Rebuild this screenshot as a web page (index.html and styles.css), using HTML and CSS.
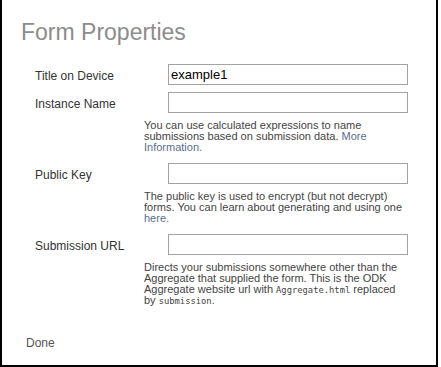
FILE: index.html
```html
<!DOCTYPE html>
<html lang="en">

<head>
  <meta charset="UTF-8">
  <meta name="viewport" content="width=device-width, initial-scale=1.0">
  <title>Form Properties</title>
  <link rel="stylesheet" href="styles.css">
</head>

<body>
  <div class="dialog">
    <h1>Form Properties</h1>

    <!-- Properties Form -->
    <form class="props">
      <div class="field">
        <div class="row">
          <label for="title">Title on Device</label>
          <input type="text" id="title" value="example1">
        </div>
      </div>

      <div class="field">
        <div class="row">
          <label for="instance">Instance Name</label>
          <input type="text" id="instance">
        </div>
        <p class="help">You can use calculated expressions to name submissions based on submission data. <a href="#">More Information.</a></p>
      </div>

      <div class="field">
        <div class="row">
          <label for="pubkey">Public Key</label>
          <input type="text" id="pubkey">
        </div>
        <p class="help">The public key is used to encrypt (but not decrypt) forms. You can learn about generating and using one <a href="#">here.</a></p>
      </div>

      <div class="field">
        <div class="row">
          <label for="url">Submission URL</label>
          <input type="text" id="url">
        </div>
        <p class="help">Directs your submissions somewhere other than the Aggregate that supplied the form. This is the ODK Aggregate website url with <code>Aggregate.html</code> replaced by <code>submission</code>.</p>
      </div>
    </form>

    <a class="done" href="#">Done</a>
  </div>
</body>

</html>
```

FILE: styles.css
```css
body {
  margin: 0;
  padding: 0;
  background: #ffffff;
  font-family: 'Liberation Sans', Arial, sans-serif;
}

.dialog {
  box-sizing: border-box;
  width: 438px;
  height: 367px;
  border: 2px solid #000;
  border-top: none;
  padding: 18px 0 15px 19px;
  display: flex;
  flex-direction: column;
  background: #fff;
}

h1 {
  margin: 0;
  font-size: 23px;
  line-height: 28px;
  font-weight: normal;
  color: #8c8c8c;
}

.props {
  margin: 18px 0 0 14px;
  display: flex;
  flex-direction: column;
  gap: 7px;
}

.row {
  display: flex;
  align-items: center;
  height: 21px;
}

.row label {
  width: 133px;
  font-size: 12px;
  color: #333;
  padding-top: 2px;
}

.row input {
  box-sizing: border-box;
  width: 240px;
  height: 21px;
  margin: 0;
  padding: 0 2px;
  border: 1px solid #a3a3a3;
  font-family: 'Liberation Sans', Arial, sans-serif;
  font-size: 13px;
  color: #000;
  outline: none;
}

.help {
  width: 265px;
  margin: 7px 0 0 109px;
  padding-bottom: 3px;
  font-size: 11px;
  line-height: 11px;
  color: #444;
}

.help a {
  color: #5a6d8c;
  text-decoration: none;
}

.help code {
  display: inline-block;
  font-family: 'DejaVu Sans Mono', monospace;
  font-size: 8.8px;
  line-height: 9px;
  color: #444;
}

.done {
  margin: auto 0 0 5px;
  font-size: 12px;
  color: #555;
  text-decoration: none;
}
```
